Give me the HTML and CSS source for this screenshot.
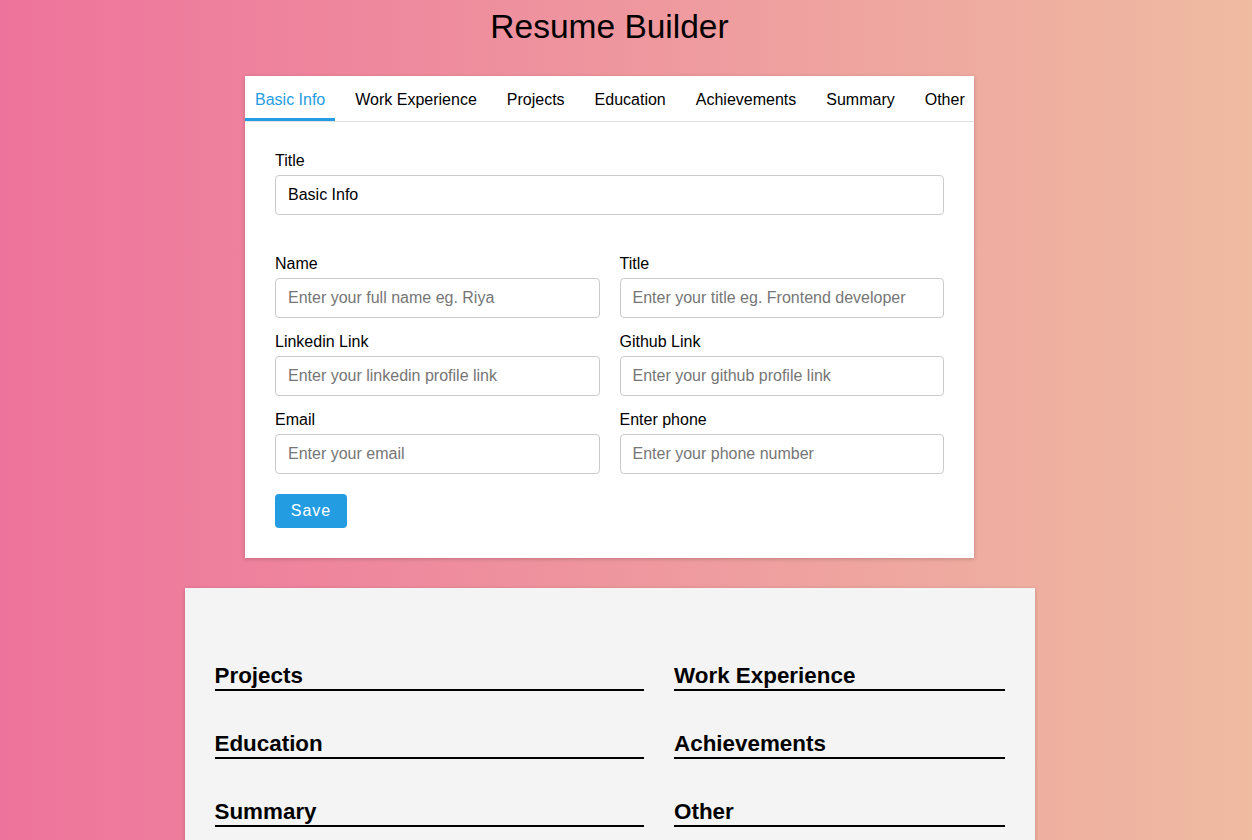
FILE: index.html
```html
<!DOCTYPE html>
<html>
<head>
<meta charset="utf-8">
<link rel="stylesheet" href="styles.css">
</head>
<body>
<h1 class="page-title">Resume Builder</h1>
<div class="card">
  <div class="tabs">
    <div class="tab active">Basic Info</div>
    <div class="tab">Work Experience</div>
    <div class="tab">Projects</div>
    <div class="tab">Education</div>
    <div class="tab">Achievements</div>
    <div class="tab">Summary</div>
    <div class="tab">Other</div>
  </div>
  <div class="card-body">
    <div class="field">
      <label>Title</label>
      <input class="input" type="text" value="Basic Info">
    </div>
    <div class="grid">
      <div class="field">
        <label>Name</label>
        <input class="input" type="text" placeholder="Enter your full name eg. Riya">
      </div>
      <div class="field">
        <label>Title</label>
        <input class="input" type="text" placeholder="Enter your title eg. Frontend developer">
      </div>
      <div class="field">
        <label>Linkedin Link</label>
        <input class="input" type="text" placeholder="Enter your linkedin profile link">
      </div>
      <div class="field">
        <label>Github Link</label>
        <input class="input" type="text" placeholder="Enter your github profile link">
      </div>
      <div class="field">
        <label>Email</label>
        <input class="input" type="text" placeholder="Enter your email">
      </div>
      <div class="field">
        <label>Enter phone</label>
        <input class="input" type="text" placeholder="Enter your phone number">
      </div>
    </div>
    <button class="save">Save</button>
  </div>
</div>
<div class="preview">
  <div class="preview-header"></div>
  <div class="preview-grid">
    <div class="col">
      <div class="section"><div class="section-title">Projects</div></div>
      <div class="section"><div class="section-title">Education</div></div>
      <div class="section"><div class="section-title">Summary</div></div>
    </div>
    <div class="col">
      <div class="section"><div class="section-title">Work Experience</div></div>
      <div class="section"><div class="section-title">Achievements</div></div>
      <div class="section"><div class="section-title">Other</div></div>
    </div>
  </div>
</div>
</body>
</html>
```
FILE: styles.css
```css
* { box-sizing: border-box; }
html, body { margin: 0; padding: 0; }
body {
  font-family: "Liberation Sans", Arial, sans-serif;
  background: linear-gradient(to right, #ee739c, #efbba1);
  min-height: 840px;
  color: #000;
  display: flex;
  flex-direction: column;
  align-items: center;
  overflow: hidden;
  padding-right: 33px;
}
.page-title {
  margin: 0;
  padding-top: 8px;
  font-size: 33.5px;
  font-weight: normal;
  line-height: 37px;
  text-align: center;
}
.card {
  margin-top: 31px;
  width: 729px;
  background: #fff;
  box-shadow: 0 1px 4px rgba(0,0,0,0.2);
}
.tabs {
  display: flex;
  gap: 10px;
  border-bottom: 1px solid #e2e2e2;
}
.tab {
  padding: 1px 10px 0;
  height: 45px;
  line-height: 46px;
  font-size: 16px;
  color: #000;
  white-space: nowrap;
  flex: 0 0 auto;
}
.tab.active {
  color: #239ce2;
  box-shadow: inset 0 -3px 0 #239ce2;
}
.card-body {
  padding: 29px 30px 30px;
}
.field {
  display: flex;
  flex-direction: column;
}
.field label {
  font-size: 16px;
  line-height: 20px;
  margin-bottom: 4px;
}
.input {
  height: 40px;
  border: 1px solid #cbcbcb;
  border-radius: 4px;
  padding: 0 12px;
  font-family: "Liberation Sans", Arial, sans-serif;
  font-size: 16px;
  color: #000;
  outline: none;
}
.input::placeholder { color: #767676; }
.grid {
  margin-top: 39px;
  display: grid;
  grid-template-columns: 1fr 1fr;
  column-gap: 20px;
  row-gap: 14px;
}
.save {
  margin-top: 20px;
  height: 34px;
  width: 72px;
  border: none;
  border-radius: 4px;
  background: #239ce2;
  color: #fff;
  font-family: "Liberation Sans", Arial, sans-serif;
  font-size: 16px;
  letter-spacing: 1px;
}
.preview {
  margin-top: 30px;
  width: 850px;
  background: #f4f4f4;
  box-shadow: 0 1px 4px rgba(0,0,0,0.2);
  padding: 30px;
  flex: 1 0 auto;
}
.preview-header {
  height: 43px;
}
.preview-grid {
  display: grid;
  grid-template-columns: 1.3fr 1fr;
  column-gap: 30px;
}
.col {
  display: flex;
  flex-direction: column;
  gap: 38px;
}
.section-title {
  font-size: 22.4px;
  font-weight: bold;
  line-height: 26px;
  padding-top: 2px;
  border-bottom: 2px solid #000;
}
```
